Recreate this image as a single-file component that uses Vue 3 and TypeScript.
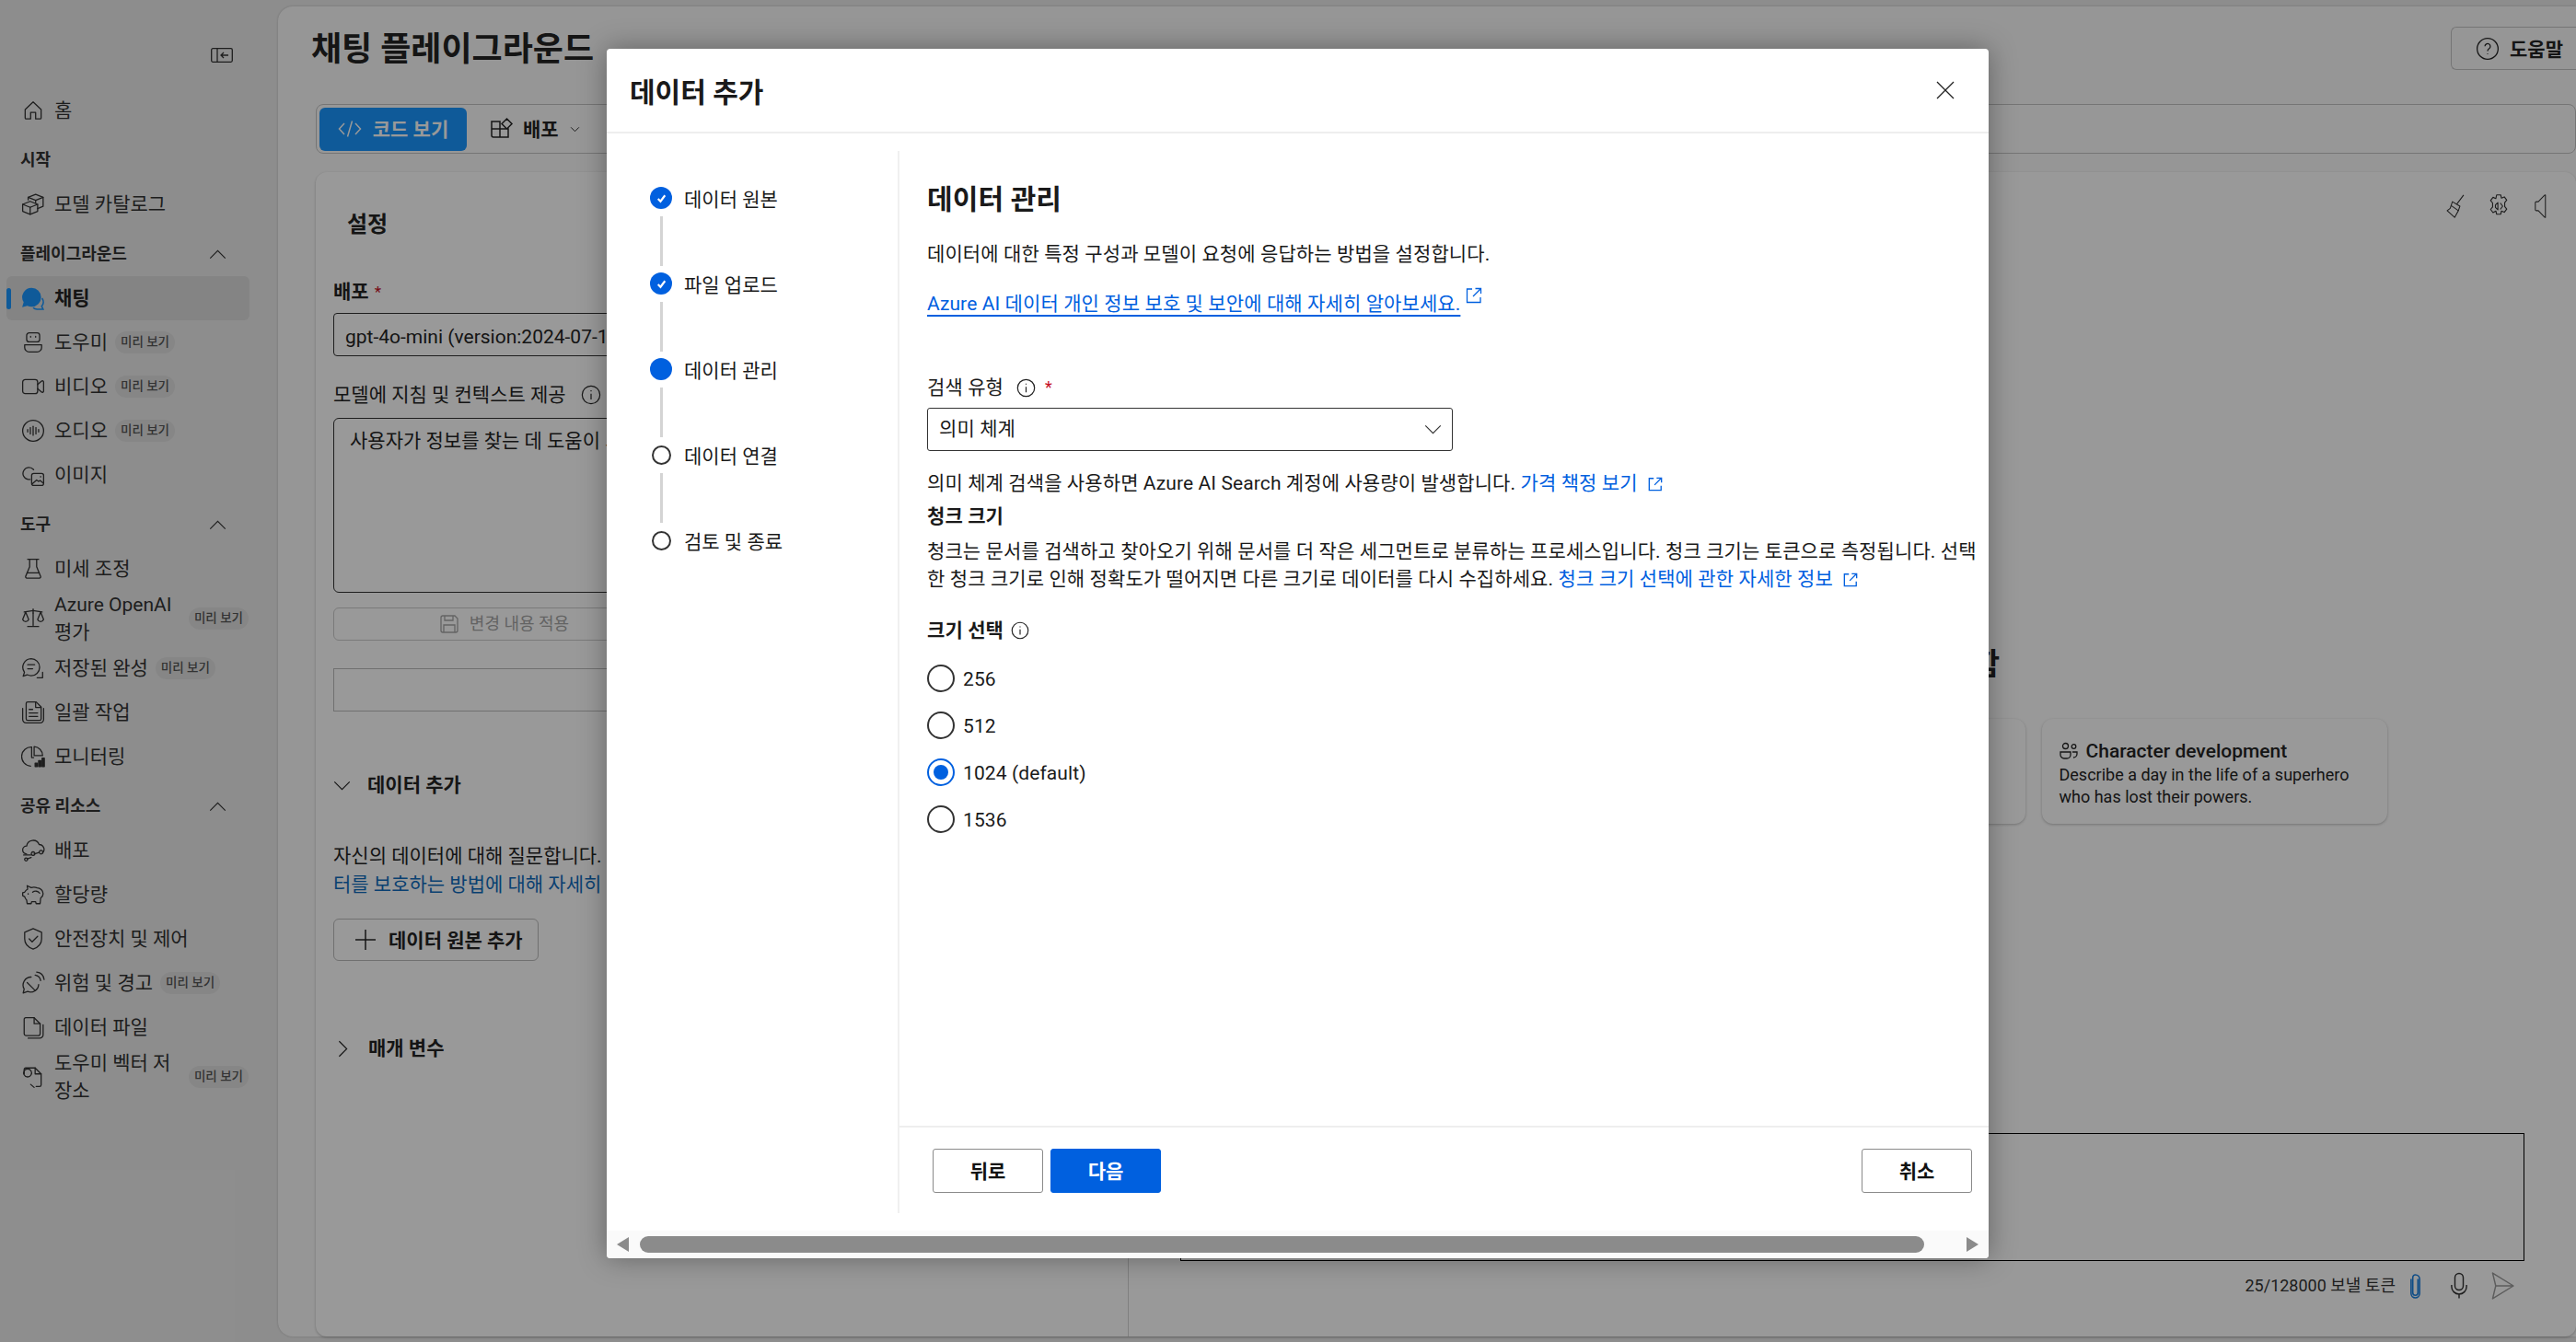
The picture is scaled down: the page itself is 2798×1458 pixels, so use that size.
<script setup lang="ts">
interface NavItem {
  label: string
  icon: string
  badge?: boolean
  active?: boolean
  tall?: boolean
}
interface NavGroup {
  title?: string
  collapsible?: boolean
  items: NavItem[]
}

const icons: Record<string, string[]> = {
  home: ['M4 11 12 3.5 20 11v8.5a1 1 0 0 1-1 1h-4.5V14h-5v6.5H5a1 1 0 0 1-1-1z'],
  catalog: ['M1.5 12 9 9l7.5 3v7L9 22l-7.5-3z', 'M1.5 12 9 15l7.5-3', 'M9 15v7', 'M7 7.5V5l7.5-3L22 5v9l-5.5 2.2', 'M7 5l7.5 3L22 5', 'M14.5 8v2.5'],
  assistant: ['M8 2.5h8a2.5 2.5 0 0 1 2.5 2.5v4a2.5 2.5 0 0 1-2.5 2.5H8A2.5 2.5 0 0 1 5.500 9V5A2.500 2.500 0 0 1 8 2.500z', 'M9.500 6v.800', 'M14.500 6v.800', 'M3.500 14.500h17V17a4.500 4.500 0 0 1-4.500 4.500H8A4.500 4.500 0 0 1 3.500 17z'],
  video: ['M1.500 7.500a2.500 2.500 0 0 1 2.500-2.500h10a2.500 2.500 0 0 1 2.500 2.500v9a2.500 2.500 0 0 1-2.500 2.500H4a2.500 2.500 0 0 1-2.500-2.500z', 'M16.500 10l4-3.500c.8-.6 2 0 2 1v9c0 1-1.200 1.600-2 1l-4-3.500'],
  audio: ['M12 1.500a10.500 10.500 0 1 0 0 21 10.500 10.500 0 0 0 0-21z', 'M6.500 10.800v2.400', 'M9.200 8.800v6.400', 'M12 7.500v9', 'M14.800 8.800v6.400', 'M17.500 10.800v2.400'],
  image: ['M9 16.500H7A6 6 0 1 1 12.500 6.800', 'M10.500 12.500a2 2 0 0 1 2-2h8a2 2 0 0 1 2 2v8a2 2 0 0 1-2 2h-8a2 2 0 0 1-2-2z', 'M11 21l4.500-4 2 1.500 1.500-1 3 2.500', 'M19.500 13.500v.5'],
  tune: ['M6.500 2.500h11', 'M8.500 2.500V10L4.500 19.500a1.300 1.300 0 0 0 1.200 1.800h12.600a1.300 1.300 0 0 0 1.200-1.800L15.500 10V2.500', 'M6 16h12'],
  scale: ['M12 2.500v4', 'M3 5.500l9-1.500 9 1.500', 'M4.500 5.500 1.500 13a3.200 3.200 0 0 0 6 0z', 'M19.500 5.500 16.500 13a3.200 3.200 0 0 0 6 0z', 'M12 6.500V19', 'M6.500 20h11'],
  saved: ['M10 2.500a8.500 8.500 0 0 1 8.500 8.500 8.500 8.500 0 0 1-8.500 8.500c-1.500 0-2.800-.4-4-1L2 20l1.300-4A8.500 8.500 0 0 1 10 2.500z', 'M6.500 8.500h7', 'M6.500 12.500h5', 'M16 21.500h5.500v-5.500'],
  batch: ['M6.500 1.500h8.500l5 5v12a1.500 1.500 0 0 1-1.500 1.500H6.500A1.500 1.500 0 0 1 5 18.500V3a1.500 1.500 0 0 1 1.500-1.500z', 'M14.500 1.500v5.500H20', 'M8 9h3.500', 'M8 12.500h8.500', 'M8 16h8.500', 'M1.500 8v11a3.500 3.500 0 0 0 3.500 3.500h14a3.500 3.500 0 0 0 3.500-3.500V8'],
  monitor: ['M10.500 2.500a9.500 9.500 0 0 0-1 19', 'M13 2v9h8.500A9 9 0 0 0 13 2z', 'M10.500 2.500V13h2'],
  deploy: ['M5.500 15.500a4 4 0 0 1 0-8 6.500 6.500 0 0 1 12.500-1.500 5 5 0 0 1 3.500 8.500', 'M2.500 16.500h7', 'M13 15.500l5-1.500', 'M12 17a1.800 1.800 0 1 0-.1 0z', 'M20 15.500a1.800 1.800 0 1 0-.1 0z', 'M6 20.500l4-1.500', 'M5 22.500a1.500 1.500 0 1 0-.1 0z'],
  quota: ['M6.500 6.500l-.5-3.500 4 2a9 9 0 0 1 6 .2A6 6 0 0 1 22 11c0 2-1 3.500-2.500 4.500L19 21h-4l-.5-2h-4L10 21H6l-.5-3.500A8 8 0 0 1 3.500 14L1.500 13v-3l2-.5a8 8 0 0 1 3-3z', 'M11.500 9.500a5 5 0 0 1 7 1', 'M7 11v.5'],
  shield: ['M12 1.800 20.500 5.500v6.500c0 5-3.500 8.500-8.500 10.200C7 20.500 3.500 17 3.500 12V5.500z', 'M8 12l3 3 5.500-5.500'],
  risk: ['M10 6a8 8 0 0 0-7 12L2 22l4.500-1.500a8 8 0 0 0 11-7', 'M6 11.500l8 8', 'M14 4c3 .5 5 2.500 5.500 5.500', 'M15.500 1c4.500 .5 7 3.500 7.500 7.500'],
  file: ['M5 2.500h8l6 6v10a2 2 0 0 1-2 2H5a2 2 0 0 1-2-2v-14.500a1.500 1.500 0 0 1 1.500-1.500z', 'M13 2.500V8.500h6', 'M22 9.500v10a3.500 3.500 0 0 1-3.500 3.500H7'],
  vector: ['M3 9V4.500A1.500 1.500 0 0 1 4.500 3H14l6 6v11a1.500 1.500 0 0 1-1.500 1.500H15', 'M14 3v6h6', 'M6.500 12a4 4 0 1 0-.1 0z', 'M9.500 19.500l3.500 3'],
}

const groups: NavGroup[] = [
  { items: [{ label: '홈', icon: 'home' }] },
  { title: '시작', items: [{ label: '모델 카탈로그', icon: 'catalog' }] },
  {
    title: '플레이그라운드',
    collapsible: true,
    items: [
      { label: '채팅', icon: 'chat', active: true },
      { label: '도우미', icon: 'assistant', badge: true },
      { label: '비디오', icon: 'video', badge: true },
      { label: '오디오', icon: 'audio', badge: true },
      { label: '이미지', icon: 'image' },
    ],
  },
  {
    title: '도구',
    collapsible: true,
    items: [
      { label: '미세 조정', icon: 'tune' },
      { label: 'Azure OpenAI 평가', icon: 'scale', badge: true, tall: true },
      { label: '저장된 완성', icon: 'saved', badge: true },
      { label: '일괄 작업', icon: 'batch' },
      { label: '모니터링', icon: 'monitor' },
    ],
  },
  {
    title: '공유 리소스',
    collapsible: true,
    items: [
      { label: '배포', icon: 'deploy' },
      { label: '할당량', icon: 'quota' },
      { label: '안전장치 및 제어', icon: 'shield' },
      { label: '위험 및 경고', icon: 'risk', badge: true },
      { label: '데이터 파일', icon: 'file' },
      { label: '도우미 벡터 저장소', icon: 'vector', badge: true, tall: true },
    ],
  },
]

const steps = [
  { label: '데이터 원본', state: 'done' },
  { label: '파일 업로드', state: 'done' },
  { label: '데이터 관리', state: 'current' },
  { label: '데이터 연결', state: 'todo' },
  { label: '검토 및 종료', state: 'todo' },
]

const sizes = [
  { label: '256', checked: false },
  { label: '512', checked: false },
  { label: '1024 (default)', checked: true },
  { label: '1536', checked: false },
]

const ideas = [
  { title: 'Shakespearean writing', text: 'Write a poem about the sea at night.' },
  { title: 'Cooking ideas', text: 'Suggest a quick dinner for tonight.' },
  { title: 'Character development', text: 'Describe a day in the life of a superhero who has lost their powers.' },
]
</script>

<template>
  <div class="page">
    <aside class="side">
      <div class="collapse">
        <svg class="ic-collapse" viewBox="0 0 24 16" fill="none" stroke="currentColor" stroke-width="1.300">
          <rect x="0.700" y="0.700" width="22.600" height="14.600" rx="1.500" />
          <path d="M7 1v14M19 8h-8M14 5l-3 3 3 3" />
        </svg>
      </div>
      <section v-for="(g, gi) in groups" :key="gi" class="group">
        <div v-if="g.title" class="group-head">
          <span>{{ g.title }}</span>
          <svg v-if="g.collapsible" class="chev-up" viewBox="0 0 20 12" fill="none" stroke="currentColor" stroke-width="1.300">
            <path d="M1 10.500 10 1.500l9 9" />
          </svg>
        </div>
        <div v-for="it in g.items" :key="it.label" class="row" :class="{ active: it.active, tall: it.tall }">
          <i v-if="it.active" class="marker"></i>
          <svg v-if="it.icon === 'chat'" class="nav-ic" viewBox="0 0 24 24">
            <path d="M10.500 1.500A9.500 9.500 0 0 1 20 11a9.500 9.500 0 0 1-9.500 9.500c-1.500 0-3-.4-4.300-1L1 21l1.500-5a9.500 9.500 0 0 1 8-14.500z" fill="#1a96ff" />
            <path d="M21 12c2 3.500 1.500 6-.5 8l1.500 3h-6c-1.500 0-3-.5-4-1.500" fill="none" stroke="#1a96ff" stroke-width="1.400" />
          </svg>
          <svg v-else class="nav-ic" viewBox="0 0 24 24" fill="none" stroke="currentColor" stroke-width="1.200" stroke-linejoin="round" stroke-linecap="round">
            <path v-for="d in icons[it.icon]" :key="d" :d="d" />
            <template v-if="it.icon === 'monitor'">
              <rect x="14" y="18.500" width="2.200" height="3.500" fill="currentColor" />
              <rect x="17.500" y="16" width="2.200" height="6" fill="currentColor" />
              <rect x="21" y="13.500" width="2.200" height="8.500" fill="currentColor" />
            </template>
          </svg>
          <span class="row-label">{{ it.label }}</span>
          <span v-if="it.badge" class="badge">미리 보기</span>
        </div>
      </section>
    </aside>

    <main class="main">
      <header class="top">
        <h1>채팅 플레이그라운드</h1>
        <button class="help">
          <svg class="ic26" viewBox="0 0 24 24" fill="none" stroke="currentColor" stroke-width="1.200">
            <circle cx="12" cy="12" r="10.500" />
            <path d="M9.300 9.500a2.700 2.700 0 1 1 4.200 2.300c-1 .7-1.500 1.200-1.500 2.400M12 16.800v.8" />
          </svg>
          <span class="nudge">도움말</span>
        </button>
      </header>

      <div class="toolbar">
        <button class="code-btn">
          <svg class="ic26" viewBox="0 0 26 20" fill="none" stroke="currentColor" stroke-width="1.500">
            <path d="M7 4 1.500 10 7 16M19 4l5.500 6-5.500 6M15.500 1.500l-5 17" />
          </svg>
          <span class="nudge">코드 보기</span>
        </button>
        <button class="deploy-btn">
          <svg class="ic26" viewBox="0 0 26 24" fill="none" stroke="currentColor" stroke-width="1.500">
            <path d="M2 4h9v8H2zM2 12h9v9H4a2 2 0 0 1-2-2zM11 12h9v9h-9zM18.500 1l5.500 5.500-5.500 5.500-5.500-5.500z" />
          </svg>
          <span class="nudge">배포</span>
          <svg class="chev-s" viewBox="0 0 12 8" fill="none" stroke="currentColor" stroke-width="1.100">
            <path d="M1 1.500 6 6.500l5-5" />
          </svg>
        </button>
      </div>

      <div class="card">
        <div class="left">
          <h2 class="settings">설정</h2>
          <div class="label first"><b>배포</b> <em>*</em></div>
          <div class="input">gpt-4o-mini (version:2024-07-18)</div>
          <div class="label second">
            모델에 지침 및 컨텍스트 제공
            <svg class="ic-info" viewBox="0 0 24 24" fill="none" stroke="currentColor" stroke-width="1.300">
              <circle cx="12" cy="12" r="10.500" />
              <path d="M12 10.500v7M12 6.500v1.300" />
            </svg>
          </div>
          <div class="textarea">사용자가 정보를 찾는 데 도움이 되는 AI 도우미입니다.</div>
          <div class="apply">
            <svg class="ic24" viewBox="0 0 24 24" fill="none" stroke="currentColor" stroke-width="1.300">
              <path d="M3 5a2 2 0 0 1 2-2h13l3 3v13a2 2 0 0 1-2 2H5a2 2 0 0 1-2-2zM7 3v5h9V3M6 21v-8h12v8" />
            </svg>
            변경 내용 적용
          </div>
          <div class="input empty"></div>
          <div class="section first-section">
            <svg class="chev" viewBox="0 0 20 12" fill="none" stroke="currentColor" stroke-width="1.300">
              <path d="M1 1.500 10 10.500l9-9" />
            </svg>
            <b>데이터 추가</b>
          </div>
          <p class="ask">자신의 데이터에 대해 질문합니다. 데이터를 추가하고 이를 사용하여 답변을 받으세요. 데이<br /><a>터를 보호하는 방법에 대해 자세히 알아보세요.</a></p>
          <button class="add-btn">
            <svg class="ic-plus" viewBox="0 0 22 22" fill="none" stroke="currentColor" stroke-width="1.500">
              <path d="M11 0v22M0 11h22" />
            </svg>
            <span class="nudge">데이터 원본 추가</span>
          </button>
          <div class="section params">
            <svg class="chev-r" viewBox="0 0 12 20" fill="none" stroke="currentColor" stroke-width="1.300">
              <path d="M1.500 1 10.500 10l-9 9" />
            </svg>
            <b>매개 변수</b>
          </div>
        </div>

        <div class="right">
          <div class="tools">
            <svg class="ic-broom" viewBox="0 0 24 32" fill="none" stroke="currentColor" stroke-width="1.300" stroke-linejoin="round">
              <path d="M23 1 14 13M8 10l10 6-2 6-5 9-10-9 4-3zM6 15l10 7" />
            </svg>
            <svg class="ic-gear" viewBox="0 0 28 32" fill="none" stroke="currentColor" stroke-width="1.300" stroke-linejoin="round">
              <path d="M11.500 2h5l1 4 3.500-1.500 3 4-2.500 3 0 5 2.500 3-3 4-3.500-1.500-1 4h-5l-1-4L7 24l-3-4 2.500-3v-5L4 9l3-4 3.500 1.500z" />
              <path d="M13 11.500l-3 3v3l3 3zM16 12l3 4-3 4" />
            </svg>
            <svg class="ic-speaker" viewBox="0 0 16 32" fill="none" stroke="currentColor" stroke-width="1.300" stroke-linejoin="round">
              <path d="M14.500 1c-.5 0-1 0-1.500.6L5 10H2.500A1.500 1.500 0 0 0 1 11.500v9A1.500 1.500 0 0 0 2.500 22H5l8 8.400c.5.600 1 .6 1.500.6z" />
            </svg>
          </div>
          <h2 class="prompt-title">프롬프트를 통해 시작함</h2>
          <div class="ideas">
            <article v-for="c in ideas" :key="c.title" class="idea">
              <div class="idea-title">
                <svg class="ic-people" viewBox="0 0 20 20" fill="none" stroke="currentColor" stroke-width="1.300">
                  <circle cx="6.500" cy="4.500" r="3" />
                  <circle cx="15.500" cy="5" r="2.300" />
                  <path d="M1 11h11v3a4 4 0 0 1-4 4H5a4 4 0 0 1-4-4zM14 11h5v2a4 4 0 0 1-4 4" />
                </svg>
                {{ c.title }}
              </div>
              <p>{{ c.text }}</p>
            </article>
          </div>
          <div class="chat-input"></div>
          <div class="chat-foot">
            <span>25/128000 보낼 토큰</span>
            <svg class="ic-clip" viewBox="0 0 14 32" fill="none" stroke="#1a80e0" stroke-width="1.700">
              <path d="M10 8v16a3 3 0 0 1-6 0V6a3 3 0 0 1 3-3 5 5 0 0 1 5 5v17a5 5 0 0 1-5 5 5 5 0 0 1-5-5V8" />
            </svg>
            <svg class="ic-mic" viewBox="0 0 20 32" fill="none" stroke="currentColor" stroke-width="1.600">
              <rect x="5" y="1" width="10" height="20" rx="5" />
              <path d="M1 15v2a9 9 0 0 0 18 0v-2M10 26v5" />
            </svg>
            <svg class="ic-send" viewBox="0 0 26 32" fill="none" stroke="#9b9b9b" stroke-width="1.500" stroke-linejoin="round">
              <path d="M1.500 1.500 25 16 1.500 30.500 5 16zM5 16h20" />
            </svg>
          </div>
        </div>
      </div>
    </main>

    <div class="overlay"></div>

    <div class="dialog" role="dialog">
      <header class="dlg-head">
        <h2>데이터 추가</h2>
        <svg class="dlg-close" viewBox="0 0 20 20" fill="none" stroke="currentColor" stroke-width="1.300">
          <path d="M1 1l18 18M19 1 1 19" />
        </svg>
      </header>
      <div class="dlg-body">
        <nav class="stepper">
          <div v-for="(s, i) in steps" :key="s.label" class="step">
            <div class="step-track">
              <span class="dot" :class="s.state">
                <svg v-if="s.state === 'done'" viewBox="0 0 12 12" fill="none" stroke="#fff" stroke-width="2">
                  <path d="M2.500 6.500 5 9l4.500-6" />
                </svg>
              </span>
              <i v-if="i < steps.length - 1" class="conn"></i>
            </div>
            <span class="step-label">{{ s.label }}</span>
          </div>
        </nav>
        <div class="pane">
          <div class="form">
            <h3 class="f-title">데이터 관리</h3>
            <p class="f-desc">데이터에 대한 특정 구성과 모델이 요청에 응답하는 방법을 설정합니다.</p>
            <div class="f-link">
              <a class="under">Azure AI 데이터 개인 정보 보호 및 보안에 대해 자세히 알아보세요.</a>
              <svg class="ext sup" viewBox="0 0 18 18" fill="none" stroke="currentColor" stroke-width="1.300">
                <path d="M7 2H1.500v14.500H16V11M10.500 1.500H16.500V7M16.500 1.500 8 10" />
              </svg>
            </div>
            <div class="f-label">
              검색 유형
              <svg class="ic-info-s" viewBox="0 0 24 24" fill="none" stroke="#222" stroke-width="1.400">
                <circle cx="12" cy="12" r="10.500" />
                <path d="M12 10.500v7M12 6.500v1.300" />
              </svg>
              <em>*</em>
            </div>
            <div class="select">
              의미 체계
              <svg class="sel-chev" viewBox="0 0 20 12" fill="none" stroke="currentColor" stroke-width="1.300">
                <path d="M1 1.500 10 10.500l9-9" />
              </svg>
            </div>
            <p class="f-help">
              의미 체계 검색을 사용하면 Azure AI Search 계정에 사용량이 발생합니다.
              <a>가격 책정 보기
                <svg class="ext" viewBox="0 0 18 18" fill="none" stroke="currentColor" stroke-width="1.500">
                  <path d="M7 2H1.500v14.500H16V11M10.500 1.500H16.500V7M16.500 1.500 8 10" />
                </svg>
              </a>
            </p>
            <h4 class="f-sub">청크 크기</h4>
            <p class="f-para">
              청크는 문서를 검색하고 찾아오기 위해 문서를 더 작은 세그먼트로 분류하는 프로세스입니다. 청크 크기는 토큰으로 측정됩니다. 선택한 청크 크기로 인해 정확도가 떨어지면 다른 크기로 데이터를 다시 수집하세요.
              <a>청크 크기 선택에 관한 자세한 정보
                <svg class="ext" viewBox="0 0 18 18" fill="none" stroke="currentColor" stroke-width="1.500">
                  <path d="M7 2H1.500v14.500H16V11M10.500 1.500H16.500V7M16.500 1.500 8 10" />
                </svg>
              </a>
            </p>
            <div class="f-size">
              <b>크기 선택</b>
              <svg class="ic-info-s" viewBox="0 0 24 24" fill="none" stroke="#222" stroke-width="1.400">
                <circle cx="12" cy="12" r="10.500" />
                <path d="M12 10.500v7M12 6.500v1.300" />
              </svg>
            </div>
            <div class="radios">
              <div v-for="r in sizes" :key="r.label" class="radio">
                <span class="ring" :class="{ on: r.checked }"></span>
                <span class="nudge">{{ r.label }}</span>
              </div>
            </div>
          </div>
          <footer class="dlg-foot">
            <button class="btn">뒤로</button>
            <button class="btn primary">다음</button>
            <button class="btn cancel">취소</button>
          </footer>
        </div>
      </div>
      <div class="hbar">
        <i class="arrow-l"></i>
        <div class="thumb"></div>
        <i class="arrow-r"></i>
      </div>
    </div>
  </div>
</template>

<style>
html, body { margin: 0; padding: 0; overflow: hidden; }
</style>

<style scoped>
.page {
  position: relative;
  display: flex;
  width: 2798px;
  height: 1458px;
  overflow: hidden;
  background: #ececec;
  color: #242424;
  font-family: Roboto, "Noto Sans CJK KR", sans-serif;
  font-size: 21px;
  line-height: 28px;
}
button { font: inherit; color: inherit; background: none; border: 0; padding: 0; }
h1, h2, h3, h4, p { margin: 0; }
em { font-style: normal; color: #c50f1f; }
a { color: #0f6cbd; }
.nudge { padding-top: 2px; }

/* sidebar */
.side { width: 302px; flex: none; box-sizing: border-box; }
.collapse { height: 96px; box-sizing: border-box; padding: 52px 0 0 229px; color: #333; }
.ic-collapse { display: block; width: 24px; height: 16px; }
.group-head {
  display: flex;
  align-items: center;
  justify-content: space-between;
  height: 48px;
  margin-top: 6px;
  padding: 0 25px 0 22px;
  width: 271px;
  box-sizing: border-box;
  font-size: 18px;
  font-weight: 700;
  color: #333;
}
.chev-up { width: 19px; height: 11px; color: #333; }
.row {
  position: relative;
  display: flex;
  align-items: center;
  gap: 10px;
  width: 264px;
  height: 48px;
  margin-left: 7px;
  padding-left: 16px;
  box-sizing: border-box;
  color: #333;
}
.row.tall { height: 60px; }
.row.tall .row-label { width: 135px; word-break: break-all; line-height: 30px; }
.row.tall .badge { position: absolute; right: 1px; }
.row.active { background: #dcdcdc; border-radius: 6px; font-weight: 700; color: #242424; }
.marker { position: absolute; left: 0; top: 13px; width: 5px; height: 23px; background: #1a96ff; border-radius: 3px; }
.nav-ic { width: 26px; height: 26px; flex: none; }
.badge {
  display: inline-block;
  margin-left: -2px;
  padding: 0 6px;
  height: 24px;
  line-height: 23px;
  border-radius: 12px;
  background: #e0e0e0;
  color: #555;
  font-size: 13.500px;
  font-weight: 500;
  white-space: nowrap;
}

/* main */
.main {
  flex: 1;
  min-width: 0;
  height: 1445px;
  margin-top: 7px;
  background: #fbfbfb;
  border-radius: 16px 0 0 16px;
  box-shadow: 0 0 3px rgba(0, 0, 0, .2);
  padding-left: 41px;
  display: flex;
  flex-direction: column;
  box-sizing: border-box;
}
.top {
  display: flex;
  align-items: center;
  justify-content: space-between;
  height: 47px;
  margin: 22px 0 37px -5px;
}
.top h1 { padding-top: 3px; font-size: 36px; line-height: 47px; font-weight: 700; white-space: nowrap; }
.help {
  display: flex;
  align-items: center;
  gap: 11px;
  width: 136px;
  height: 47px;
  padding-left: 26px;
  box-sizing: border-box;
  border: 1px solid #c4c4c4;
  border-right: 0;
  border-radius: 6px 0 0 6px;
  font-weight: 700;
  white-space: nowrap;
  flex: none;
}
.ic26 { width: 26px; height: 26px; flex: none; }
.ic24 { width: 24px; height: 24px; }
.toolbar {
  display: flex;
  align-items: center;
  gap: 25px;
  height: 54px;
  padding-left: 3px;
  box-sizing: border-box;
  border: 1px solid #c4c4c4;
  border-radius: 8px;
  background: #fcfcfc;
}
.code-btn {
  display: flex;
  align-items: center;
  gap: 12px;
  width: 160px;
  height: 47px;
  justify-content: center;
  background: #1996ff;
  color: #fff;
  border-radius: 6px;
  font-weight: 700;
}
.deploy-btn { display: flex; align-items: center; gap: 10px; font-weight: 700; }
.chev-s { width: 11px; height: 7px; margin-left: 2px; }
.card {
  display: flex;
  height: 1265px;
  margin-top: 20px;
  background: #fff;
  border-radius: 12px;
  box-shadow: 0 1px 3px rgba(0, 0, 0, .25);
  overflow: hidden;
}
.left {
  width: 883px;
  flex: none;
  padding: 41px 0 0 19px;
  box-sizing: border-box;
  border-right: 1px solid #d4d4d4;
}
.settings { margin-left: 15px; font-size: 24px; line-height: 32px; font-weight: 700; }
.label { display: flex; align-items: center; gap: 6px; line-height: 28px; white-space: nowrap; }
.label.first { margin-top: 43px; }
.label.first em { font-size: 17px; }
.label.second { margin-top: 28px; }
.ic-info { width: 22px; height: 22px; margin-left: 10px; }
.input {
  width: 830px;
  height: 47px;
  margin-top: 9px;
  padding: 3px 0 0 12px;
  line-height: 45px;
  box-sizing: border-box;
  border: 1px solid #333;
  border-radius: 4px;
  white-space: nowrap;
  overflow: hidden;
}
.input.empty { margin-top: 30px; border: 1px solid #bbb; border-radius: 0; }
.textarea {
  width: 830px;
  height: 190px;
  margin-top: 11px;
  padding: 10px 17px;
  box-sizing: border-box;
  border: 1px solid #333;
  border-radius: 6px;
}
.apply {
  display: flex;
  align-items: center;
  justify-content: center;
  gap: 10px;
  width: 830px;
  height: 36px;
  margin-top: 16px;
  padding-right: 460px;
  box-sizing: border-box;
  border: 1px solid #ccc;
  border-radius: 6px;
  color: #a6a6a6;
  font-size: 18px;
  white-space: nowrap;
}
.section { display: flex; align-items: center; line-height: 28px; white-space: nowrap; }
.first-section { margin-top: 66px; }
.chev { width: 19px; height: 11px; margin-right: 18px; }
.chev-r { width: 11px; height: 19px; margin: 0 22px 0 5px; }
.ask { margin-top: 48px; line-height: 31px; white-space: nowrap; }
.add-btn {
  display: flex;
  align-items: center;
  gap: 14px;
  width: 223px;
  height: 46px;
  margin-top: 21px;
  padding-left: 23px;
  box-sizing: border-box;
  border: 1px solid #bbb;
  border-radius: 6px;
  font-weight: 700;
  white-space: nowrap;
}
.ic-plus { width: 22px; height: 22px; flex: none; }
.params { margin-top: 81px; }
.right {
  flex: 1;
  min-width: 0;
  display: flex;
  flex-direction: column;
  padding: 21px 56px 40px;
  box-sizing: border-box;
}
.tools { display: flex; justify-content: flex-end; align-items: center; height: 32px; margin-right: -25px; color: #333; }
.ic-broom { width: 24px; height: 26px; margin-right: 22px; }
.ic-gear { width: 26px; height: 28px; margin-right: 25px; }
.ic-speaker { width: 15px; height: 26px; }
.prompt-title { margin-top: 460px; text-align: center; font-size: 33px; line-height: 44px; font-weight: 700; white-space: nowrap; }
.ideas { display: flex; justify-content: center; gap: 18px; margin-top: 37px; }
.idea {
  width: 375px;
  height: 114px;
  padding: 21px 18px 0 19px;
  box-sizing: border-box;
  background: #fff;
  border-radius: 12px;
  box-shadow: 0 1px 3px rgba(0, 0, 0, .25);
  font-size: 18px;
  line-height: 24px;
}
.idea-title { display: flex; align-items: center; gap: 9px; font-size: 21px; font-weight: 500; line-height: 28px; white-space: nowrap; }
.idea p { margin-top: 0; }
.ic-people { width: 20px; height: 20px; }
.chat-input { margin-top: auto; height: 139px; border: 1.500px solid #000; box-sizing: border-box; }
.chat-foot {
  display: flex;
  align-items: center;
  justify-content: flex-end;
  height: 30px;
  margin-top: 12px;
  padding-right: 11px;
  font-size: 18px;
  color: #333;
}
.ic-clip { width: 13px; height: 32px; margin-left: 15px; }
.ic-mic { width: 18px; height: 30px; margin-left: 32px; }
.ic-send { width: 25px; height: 32px; margin-left: 26px; }

.overlay { position: absolute; inset: 0; background: rgba(0, 0, 0, .4); }

/* dialog */
.dialog {
  position: absolute;
  left: 659px;
  top: 53px;
  width: 1501px;
  height: 1314px;
  display: flex;
  flex-direction: column;
  background: #fff;
  color: #1a1a1a;
  border-radius: 4px;
  overflow: hidden;
  box-shadow: 0 0 30px rgba(0, 0, 0, .35);
}
.dlg-head {
  display: flex;
  align-items: center;
  justify-content: space-between;
  flex: none;
  height: 92px;
  padding: 5px 37px 0 25px;
  box-sizing: border-box;
  border-bottom: 2px solid #eeeeee;
}
.dlg-head h2 { font-size: 30px; line-height: 40px; font-weight: 700; }
.dlg-close { width: 20px; height: 20px; margin-top: -5px; color: #222; }
.dlg-body { flex: 1; display: flex; min-height: 0; margin: 19px 0; }
.stepper {
  width: 318px;
  flex: none;
  box-sizing: border-box;
  padding: 39px 0 0 47px;
  border-right: 2px solid #f0f0f0;
}
.step { display: flex; height: 93px; gap: 13px; }
.step-track { display: flex; flex-direction: column; align-items: center; width: 24px; }
.dot {
  display: flex;
  align-items: center;
  justify-content: center;
  box-sizing: border-box;
  width: 24px;
  height: 24px;
  flex: none;
  border-radius: 50%;
  background: #0060df;
}
.dot svg { width: 13px; height: 13px; }
.dot.todo { width: 21px; height: 21px; margin: 1.500px 0; background: #fff; border: 2px solid #333; }
.conn { width: 3px; height: 54px; margin-top: 8px; background: #d4d4d4; }
.step-label { padding-top: 2px; line-height: 24px; white-space: nowrap; }
.pane { flex: 1; min-width: 0; display: flex; flex-direction: column; }
.form { flex: 1; padding: 33px 10px 0 30px; min-height: 0; overflow: hidden; letter-spacing: .1px; }
.f-title { font-size: 30px; line-height: 40px; font-weight: 700; }
.f-desc { margin-top: 24px; line-height: 30px; }
.f-link { display: flex; align-items: flex-start; margin-top: 24px; height: 30px; line-height: 30px; color: #0060df; }
.f-link a, .f-help a, .f-para a { color: #0060df; }
.under { text-decoration: underline; text-underline-offset: 5px; text-decoration-thickness: 2px; white-space: nowrap; }
.ext { display: inline-block; width: 16px; height: 16px; margin-left: 6px; vertical-align: -2px; }
.ext.sup { width: 18px; height: 18px; margin: -3px 0 0 6px; flex: none; }
.f-label { display: flex; align-items: center; margin-top: 62px; line-height: 28px; }
.ic-info-s { width: 21px; height: 21px; margin-left: 14px; }
.f-label em { margin-left: 10px; font-size: 18px; }
.select {
  position: relative;
  width: 571px;
  height: 47px;
  margin-top: 8px;
  padding-left: 12px;
  line-height: 45px;
  box-sizing: border-box;
  border: 1px solid #333;
  border-radius: 3px;
}
.sel-chev { position: absolute; right: 11px; top: 17px; width: 19px; height: 11px; color: #333; }
.f-help { margin-top: 20px; line-height: 30px; white-space: nowrap; }
.f-sub { margin-top: 6px; font-size: 21px; line-height: 30px; font-weight: 700; }
.f-para { width: 1146px; margin-top: 8px; line-height: 30px; }
.f-size { display: flex; align-items: center; gap: 0; margin-top: 27px; line-height: 28px; }
.f-size .ic-info-s { width: 20px; height: 20px; margin-left: 8px; }
.radios { margin-top: 12px; }
.radio { display: flex; align-items: center; gap: 9px; height: 51px; }
.ring {
  width: 30px;
  height: 30px;
  box-sizing: border-box;
  border: 2px solid #333;
  border-radius: 50%;
  flex: none;
  position: relative;
}
.ring.on { border-color: #0060df; }
.ring.on::after {
  content: "";
  position: absolute;
  inset: 5px;
  border-radius: 50%;
  background: #0060df;
}
.dlg-foot {
  display: flex;
  gap: 8px;
  flex: none;
  height: 95px;
  padding: 23px 18px 0 36px;
  box-sizing: border-box;
  border-top: 2px solid #eeeeee;
}
.btn {
  width: 120px;
  height: 48px;
  padding-top: 2px;
  box-sizing: border-box;
  border: 1px solid #8a8a8a;
  border-radius: 3px;
  background: #fff;
  font-weight: 700;
  color: #111;
}
.btn.primary { background: #0060df; border-color: #0060df; color: #fff; }
.btn.cancel { margin-left: auto; }
.hbar {
  position: relative;
  flex: none;
  height: 30px;
  background: #fafafa;
  display: flex;
  align-items: center;
  padding-left: 36px;
}
.thumb { width: 1395px; height: 18px; border-radius: 9px; background: #8b8b8b; }
.arrow-l, .arrow-r { position: absolute; top: 7px; width: 0; height: 0; border-top: 8px solid transparent; border-bottom: 8px solid transparent; }
.arrow-l { left: 11px; border-right: 13px solid #8b8b8b; }
.arrow-r { right: 11px; border-left: 13px solid #8b8b8b; }
</style>
